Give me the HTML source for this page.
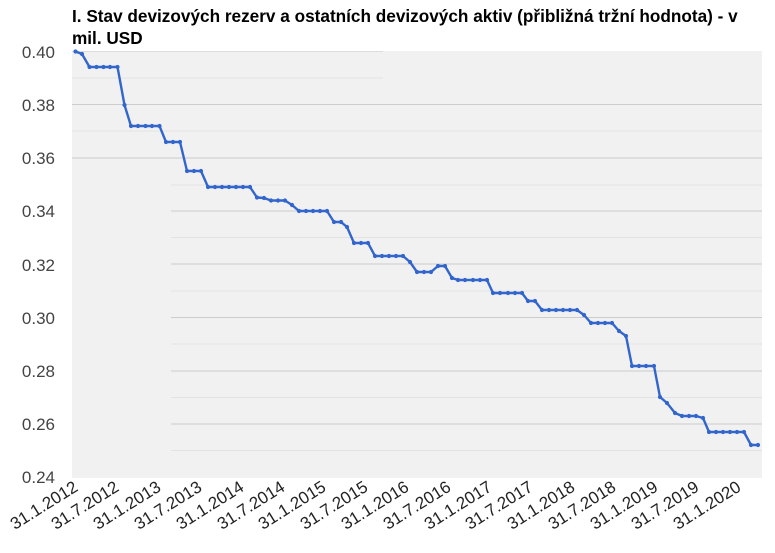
<!DOCTYPE html>
<html><head><meta charset="utf-8"><style>
html,body{margin:0;padding:0;background:#fff;width:775px;height:553px;overflow:hidden}
svg{display:block}
text{font-family:"Liberation Sans",Arial,sans-serif}
</style></head><body>
<svg width="775" height="553" viewBox="0 0 775 553" xmlns="http://www.w3.org/2000/svg">
<text x="72" y="22" font-size="17.2" font-weight="bold" fill="#000">I. Stav devizových rezerv a ostatních devizových aktiv (přibližná tržní hodnota) - v</text>
<text x="72" y="44" font-size="17.2" font-weight="bold" fill="#000">mil. USD</text>
<rect x="72" y="51" width="690" height="427" fill="#f1f1f1"/>
<g stroke-width="1">
<line x1="72" x2="383" y1="51.5" y2="51.5" stroke="#dcdcdc"/>
<line x1="72" x2="383" y1="78" y2="78" stroke="#e2e2e2"/>
<line x1="72" x2="762" y1="104.5" y2="104.5" stroke="#cccccc"/>
<line x1="72" x2="762" y1="131" y2="131" stroke="#e2e2e2"/>
<line x1="72" x2="762" y1="158" y2="158" stroke="#cccccc"/>
<line x1="171" x2="762" y1="185" y2="185" stroke="#e2e2e2"/>
<line x1="171" x2="762" y1="211" y2="211" stroke="#cccccc"/>
<line x1="171" x2="762" y1="237.5" y2="237.5" stroke="#e2e2e2"/>
<line x1="171" x2="762" y1="264" y2="264" stroke="#cccccc"/>
<line x1="171" x2="762" y1="291" y2="291" stroke="#e2e2e2"/>
<line x1="171" x2="762" y1="317.5" y2="317.5" stroke="#cccccc"/>
<line x1="171" x2="762" y1="344" y2="344" stroke="#e2e2e2"/>
<line x1="171" x2="762" y1="371" y2="371" stroke="#cccccc"/>
<line x1="171" x2="762" y1="397.5" y2="397.5" stroke="#e2e2e2"/>
<line x1="171" x2="762" y1="424" y2="424" stroke="#cccccc"/>
<line x1="171" x2="762" y1="450.5" y2="450.5" stroke="#e2e2e2"/>
</g>
<g font-size="17" fill="#444" text-anchor="end">
<text x="55" y="58">0.40</text>
<text x="55" y="111">0.38</text>
<text x="55" y="164">0.36</text>
<text x="55" y="217">0.34</text>
<text x="55" y="271">0.32</text>
<text x="55" y="324">0.30</text>
<text x="55" y="377">0.28</text>
<text x="55" y="430">0.26</text>
<text x="55" y="483">0.24</text>
</g>
<polyline fill="none" stroke="#3366cc" stroke-width="2.4" stroke-linejoin="round" points="75.5,51.5 82,54 89.5,67 96.5,67 103.5,67 110,67 117.5,67 124.5,105 131,126 138,126 145.5,126 152,126 159.5,126 166,142 173,142 180,142 187,171 194,171 201,171 208,187 215,187 222,187 229,187 236,187 243,187 250,187 257,197.5 264,198 271,200.5 278,200.5 285,200.5 292,205 299,211 306,211 313,211 320,211 327,211 334,222 341,222 347,227 354,243 361,243 368,243 375,256 382,256 389,256 396,256 403,256 410,262 417,272 424,272 431,272 438,266 445,266 452,278 458,280 465,280 473,280 480,280 487,280 493,293 500,293 508,293 515,293 522,293 528,301 535,301 542,310 549,310 556,310 563,310 570,310 577,310 584,315 591,323 598,323 605,323 612,323 619,331 626,336 632,366 639,366 646,366 654,366 660,397 667,403 675,413 682,416 689,416 696,416 703,418 709,432 716,432 723,432 730,432 737,432 744,432 751,445 758,445"/>
<g fill="#3366cc" id="dots"></g>
<g font-size="17" fill="#222" text-anchor="end">
<text transform="translate(79,490) rotate(-32)">31.1.2012</text>
<text transform="translate(120,490) rotate(-32)">31.7.2012</text>
<text transform="translate(162,490) rotate(-32)">31.1.2013</text>
<text transform="translate(203,490) rotate(-32)">31.7.2013</text>
<text transform="translate(245,490) rotate(-32)">31.1.2014</text>
<text transform="translate(286,490) rotate(-32)">31.7.2014</text>
<text transform="translate(327,490) rotate(-32)">31.1.2015</text>
<text transform="translate(369,490) rotate(-32)">31.7.2015</text>
<text transform="translate(410,490) rotate(-32)">31.1.2016</text>
<text transform="translate(452,490) rotate(-32)">31.7.2016</text>
<text transform="translate(493,490) rotate(-32)">31.1.2017</text>
<text transform="translate(534,490) rotate(-32)">31.7.2017</text>
<text transform="translate(576,490) rotate(-32)">31.1.2018</text>
<text transform="translate(617,490) rotate(-32)">31.7.2018</text>
<text transform="translate(659,490) rotate(-32)">31.1.2019</text>
<text transform="translate(700,490) rotate(-32)">31.7.2019</text>
<text transform="translate(742,490) rotate(-32)">31.1.2020</text>
</g>
</svg>
<script>
(function(){var p=document.querySelector('polyline').getAttribute('points').trim().split(/\s+/);var g=document.getElementById('dots');p.forEach(function(s){var a=s.split(',');var c=document.createElementNS('http://www.w3.org/2000/svg','circle');c.setAttribute('cx',a[0]);c.setAttribute('cy',a[1]);c.setAttribute('r','2.1');g.appendChild(c);});})();
</script>
</body></html>
